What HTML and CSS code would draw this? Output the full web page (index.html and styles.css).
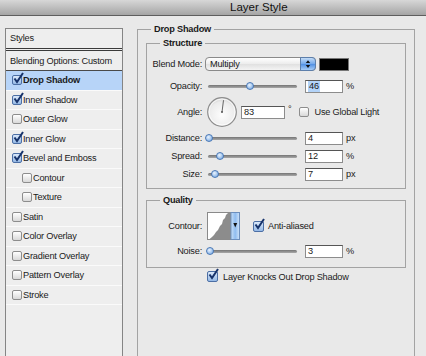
FILE: index.html
```html
<!DOCTYPE html>
<html lang="en">
<head>
    <meta charset="UTF-8">
    <meta name="viewport" content="width=device-width, initial-scale=1.0">
    <title>Layer Style</title>
    <link rel="stylesheet" href="styles.css">
</head>
<body>
    <div class="titlebar">Layer Style</div>

    <div class="dialog">
        <!-- left column: list of effects -->
        <div class="styles-list">
            <div class="list-head">Styles</div>
            <div class="list-row blending">Blending Options: Custom</div>
            <div class="list-row selected"><span class="cb on"><svg viewBox="0 0 11 11"><path d="M1.5 5.5 L4 9 L10 0"/></svg></span>Drop Shadow</div>
            <div class="list-row"><span class="cb on"><svg viewBox="0 0 11 11"><path d="M1.5 5.5 L4 9 L10 0"/></svg></span>Inner Shadow</div>
            <div class="list-row"><span class="cb"></span>Outer Glow</div>
            <div class="list-row"><span class="cb on"><svg viewBox="0 0 11 11"><path d="M1.5 5.5 L4 9 L10 0"/></svg></span>Inner Glow</div>
            <div class="list-row"><span class="cb on"><svg viewBox="0 0 11 11"><path d="M1.5 5.5 L4 9 L10 0"/></svg></span>Bevel and Emboss</div>
            <div class="list-row sub"><span class="cb"></span>Contour</div>
            <div class="list-row sub"><span class="cb"></span>Texture</div>
            <div class="list-row"><span class="cb"></span>Satin</div>
            <div class="list-row"><span class="cb"></span>Color Overlay</div>
            <div class="list-row"><span class="cb"></span>Gradient Overlay</div>
            <div class="list-row"><span class="cb"></span>Pattern Overlay</div>
            <div class="list-row"><span class="cb"></span>Stroke</div>
        </div>

        <!-- right column: drop shadow settings -->
        <fieldset class="group outer">
            <legend>Drop Shadow</legend>

            <fieldset class="group structure">
                <legend>Structure</legend>
                <div class="row blend">
                    <span class="lbl">Blend Mode:</span>
                    <div class="select">
                        <span>Multiply</span>
                        <span class="stepper"><svg viewBox="0 0 14 12"><path d="M7 2.2 L9.2 5 L4.8 5 Z M7 10 L9.2 7 L4.8 7 Z"/></svg></span>
                    </div>
                    <div class="swatch"></div>
                </div>
                <div class="row">
                    <span class="lbl">Opacity:</span>
                    <div class="slider"><span class="knob" style="left:42px"></span></div>
                    <div class="field"><span class="sel">46</span></div>
                    <span class="unit">%</span>
                </div>
                <div class="row angle">
                    <span class="lbl">Angle:</span>
                    <svg class="dial" viewBox="0 0 30 30">
                        <defs>
                            <radialGradient id="dialFill" cx="50%" cy="60%" r="60%">
                                <stop offset="0" stop-color="#fdfdfd"/>
                                <stop offset="0.75" stop-color="#ececec"/>
                                <stop offset="1" stop-color="#cfcfcf"/>
                            </radialGradient>
                        </defs>
                        <circle cx="15" cy="15" r="14.3" fill="url(#dialFill)" stroke="#8d8d8d" stroke-width="1.2"/>
                        <circle cx="15" cy="15" r="13" fill="none" stroke="#ffffff" stroke-width="0.8"/>
                        <line x1="15" y1="15" x2="16.5" y2="3.2" stroke="#555" stroke-width="0.9"/>
                        <circle cx="15" cy="15" r="1" fill="#555"/>
                    </svg>
                    <div class="field wide">83</div>
                    <span class="deg">°</span>
                    <span class="cb global"></span>
                    <span>Use Global Light</span>
                </div>
                <div class="row">
                    <span class="lbl">Distance:</span>
                    <div class="slider"><span class="knob" style="left:1px"></span></div>
                    <div class="field">4</div>
                    <span class="unit">px</span>
                </div>
                <div class="row">
                    <span class="lbl">Spread:</span>
                    <div class="slider"><span class="knob" style="left:12px"></span></div>
                    <div class="field">12</div>
                    <span class="unit">%</span>
                </div>
                <div class="row">
                    <span class="lbl">Size:</span>
                    <div class="slider"><span class="knob" style="left:7px"></span></div>
                    <div class="field">7</div>
                    <span class="unit">px</span>
                </div>
            </fieldset>

            <fieldset class="group quality">
                <legend>Quality</legend>
                <div class="row contour">
                    <span class="lbl">Contour:</span>
                    <svg class="curve" viewBox="0 0 33 28">
                        <defs>
                            <linearGradient id="tabFill" x1="0" y1="0" x2="1" y2="0">
                                <stop offset="0" stop-color="#c9e0f8"/>
                                <stop offset="0.5" stop-color="#8fbcf0"/>
                                <stop offset="1" stop-color="#cfe3f9"/>
                            </linearGradient>
                        </defs>
                        <rect x="0.5" y="0.5" width="32" height="27" fill="#ffffff" stroke="#8a8a8a"/>
                        <path d="M2 27.5 L5 25 L7 23 L9 20 L11 18 L13 14 L15 12 L16 8 L18 6 L19 3 L21 1 L24 1 L24 27.5 Z" fill="#8c8c8c"/>
                        <rect x="24" y="0.5" width="8.5" height="27" fill="url(#tabFill)" stroke="#6d8fbd"/>
                        <path d="M26.3 11 L30.2 11 L28.25 15.5 Z" fill="#111"/>
                    </svg>
                    <span class="cb on big"><svg viewBox="0 0 11 11"><path d="M1.5 5.5 L4 9 L10 0"/></svg></span>
                    <span>Anti-aliased</span>
                </div>
                <div class="row noise">
                    <span class="lbl">Noise:</span>
                    <div class="slider"><span class="knob" style="left:2px"></span></div>
                    <div class="field">3</div>
                    <span class="unit">%</span>
                </div>
            </fieldset>

            <div class="row knocks">
                <span class="cb on big"><svg viewBox="0 0 11 11"><path d="M1.5 5.5 L4 9 L10 0"/></svg></span>
                <span>Layer Knocks Out Drop Shadow</span>
            </div>
        </fieldset>
    </div>
</body>
</html>
```

FILE: styles.css
```css
body {
    margin: 0;
    width: 426px;
    height: 356px;
    overflow: hidden;
    background: #e9e9e9;
    font-family: "Liberation Sans", Arial, sans-serif;
    font-size: 9.2px;
    letter-spacing: -0.2px;
    color: #1a1a1a;
}
.titlebar {
    height: 15px;
    line-height: 15px;
    padding-left: 230px;
    font-size: 11.5px;
    letter-spacing: 0;
    color: #111;
    background: linear-gradient(#d7d7d7, #a5a5a5);
    border-bottom: 1px solid #5e5e5e;
}
.dialog {
    display: flex;
    align-items: flex-start;
}

/* effect list */
.styles-list {
    flex: none;
    margin: 12px 0 0 5px;
    width: 118px;
    height: 328px;
    box-sizing: border-box;
    border: 1px solid #858585;
    border-bottom: none;
    background: #eeeeee;
}
.list-head {
    height: 19px;
    line-height: 19px;
    padding-left: 4px;
    border-bottom: 3px double #3a3a3a;
}
.list-row {
    display: flex;
    align-items: center;
    height: 19.5px;
    box-sizing: border-box;
    padding-left: 6px;
    border-bottom: 1px solid #fafafa;
}
.list-row.blending {
    height: 20px;
    padding-left: 4px;
    border-bottom-color: #4a4a4a;
}
.list-row.sub {
    padding-left: 16px;
}
.list-row.selected {
    background: #b7d4f8;
    font-weight: bold;
}

/* checkboxes */
.cb {
    position: relative;
    flex: none;
    width: 10px;
    height: 10px;
    box-sizing: border-box;
    margin-right: 1px;
    border: 1px solid #8d8d8d;
    border-radius: 2px;
    background: linear-gradient(#ffffff, #d9d9d9);
}
.cb.on {
    border-color: #4c6fa5;
    background: linear-gradient(#dbe9fa, #95b9e6);
}
.cb.big {
    width: 11px;
    height: 11px;
}
.cb svg {
    position: absolute;
    left: 0;
    top: -3px;
    width: 11px;
    height: 11px;
    overflow: visible;
}
.cb path {
    fill: none;
    stroke: #17336b;
    stroke-width: 2;
}

/* group boxes */
.group {
    margin: 0;
    min-width: 0;
    border: 1px solid #a3a3a3;
    padding: 6.5px 8px 5px 5px;
}
.group legend {
    margin-left: 8px;
    padding: 0 3px;
    line-height: 11px;
    font-weight: bold;
}
.group.outer {
    flex: none;
    margin: 7.5px 0 0 14px;
    width: 278px;
    height: 333px;
    box-sizing: border-box;
    padding: 3px 8px 0 8px;
    border-bottom: none;
}
.group.outer > legend {
    margin-left: 5px;
}
.group.quality {
    margin-top: 5.5px;
    padding-top: 6px;
    padding-bottom: 6.5px;
}

/* setting rows */
.row {
    display: flex;
    align-items: center;
    height: 18px;
}
.lbl {
    flex: none;
    width: 50px;
    text-align: right;
}
.row.blend {
    margin-bottom: 4px;
}
.row.angle {
    height: 34px;
}
.row.contour {
    height: 29px;
}
.row.noise {
    margin-top: 1.5px;
}
.row.knocks {
    padding-left: 61px;
}
.row.knocks .cb {
    margin-right: 5px;
}

.select {
    flex: none;
    display: flex;
    align-items: center;
    justify-content: space-between;
    margin-left: 3px;
    width: 111px;
    height: 14px;
    box-sizing: border-box;
    padding-left: 4px;
    border: 1px solid #8a8a8a;
    border-radius: 4px;
    background: linear-gradient(#ffffff, #ececec 50%, #e0e0e0 51%, #f4f4f4);
}
.stepper {
    width: 16px;
    height: 14px;
    margin: -1px -1px -1px 0;
    box-sizing: border-box;
    border: 1px solid #5d7fab;
    border-radius: 0 4px 4px 0;
    background: linear-gradient(#c3dcf7, #71a7ea 50%, #4f8fe3 51%, #a6ccf6);
}
.stepper svg {
    display: block;
    width: 14px;
    height: 12px;
}
.stepper path {
    fill: #111;
}
.swatch {
    flex: none;
    margin-left: 3px;
    width: 30px;
    height: 13px;
    box-sizing: border-box;
    border: 1px solid #777;
    background: #000;
}

.slider {
    position: relative;
    flex: none;
    margin-left: 6px;
    width: 89px;
    height: 10px;
}
.slider::before {
    content: "";
    position: absolute;
    left: 0;
    right: 0;
    top: 3.5px;
    height: 3px;
    border-radius: 2px;
    background: linear-gradient(#747474, #a9a9a9);
}
.knob {
    position: absolute;
    top: 1px;
    width: 8px;
    height: 8px;
    margin-left: -4px;
    box-sizing: border-box;
    border: 1px solid #4a78b5;
    border-radius: 50%;
    background: radial-gradient(circle at 40% 35%, #eaf3fd, #6aa1e2);
}

.field {
    flex: none;
    margin-left: 8px;
    width: 38px;
    height: 13px;
    box-sizing: border-box;
    padding-left: 2px;
    border: 1px solid #8c8c8c;
    border-top-color: #555;
    background: #fff;
    line-height: 11px;
}
.field.wide {
    margin-left: 4px;
    width: 44px;
}
.field .sel {
    display: inline-block;
    padding: 0 1px;
    background: #b3d3f8;
}
.unit {
    margin-left: 3px;
}
.deg {
    align-self: flex-start;
    margin: 9px 0 0 3px;
}

.dial {
    flex: none;
    margin-left: 5px;
    width: 30px;
    height: 30px;
}
.cb.global {
    margin: 0 5px 0 8px;
}

.curve {
    flex: none;
    margin-left: 5px;
    width: 33px;
    height: 28px;
}
.row.contour .cb {
    margin: 0 4px 0 13px;
}
```
